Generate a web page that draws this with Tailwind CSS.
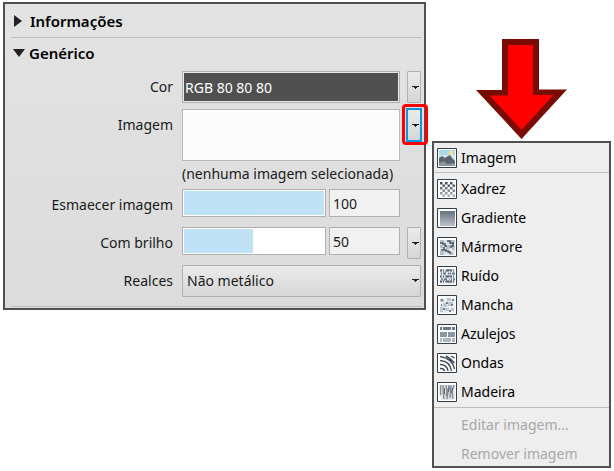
<!DOCTYPE html>
<html lang="pt-BR">
<head>
  <meta charset="UTF-8">
  <meta name="viewport" content="width=device-width, initial-scale=1">
  <title>Genérico</title>
  <script src="https://cdn.jsdelivr.net/npm/@tailwindcss/browser@4"></script>
</head>
<body class="bg-white font-['Noto_Sans',sans-serif] text-sm leading-5 text-[#1a1a1a]">
  <main class="flex items-start gap-[6px] pl-[3px] pr-[3px] pb-[3px]">

    <!-- Painel de propriedades -->
    <section class="mt-[2px] min-w-0 flex-1 border-2 border-[#505050] bg-linear-to-b from-[#e3e3e3] to-[#dcdcdc]">
      <div class="ml-[6px] mr-[2px]">
        <button type="button" class="flex h-[34px] w-full items-center gap-2 border-b border-[#bdbdbd] pl-[3px] text-[15px] font-semibold text-black">
          <svg class="h-3 w-2" viewBox="0 0 8 12" fill="#222"><path d="M0 0L8 6L0 12Z"/></svg>
          Informações
        </button>
        <button type="button" class="flex h-[29px] w-full items-center gap-1 pl-[2px] text-[15px] font-semibold text-black">
          <svg class="h-2 w-3" viewBox="0 0 12 8" fill="#222"><path d="M0 0H12L6 8Z"/></svg>
          Genérico
        </button>

        <div class="mr-px flex flex-col gap-[6px] pt-1 pb-[9px]">
          <div class="flex items-center gap-[7px]">
            <label for="cor" class="w-[162px] shrink-0 text-right">Cor</label>
            <input id="cor" value="RGB 80 80 80" readonly class="ml-[2px] h-8 min-w-0 flex-1 border border-[#b0b0b0] bg-[#505050] px-[2px] text-white outline outline-[#e8e8e8] -outline-offset-2">
            <button type="button" aria-label="Opções de cor" class="flex h-8 w-[14px] items-center justify-end rounded-[1px] border border-[#b0b0b0] bg-linear-to-b from-[#ebebeb] to-[#d6d6d6] pr-px"><svg class="h-[3px] w-[7px]" viewBox="0 0 7 3" fill="#222"><path d="M0 0H7V1H5V2H4V3H3V2H2V1H0Z"/></svg></button>
          </div>

          <div class="flex items-start gap-[7px]">
            <span class="w-[162px] shrink-0 pt-[6px] text-right">Imagem</span>
            <div class="ml-[2px] min-w-0 flex-1">
              <div class="h-[52px] border border-[#b8b8b8] bg-[#fcfcfc]"></div>
              <p class="h-[22px] pt-[3px] whitespace-nowrap">(nenhuma imagem selecionada)</p>
            </div>
            <button type="button" aria-label="Opções de imagem" class="relative flex h-8 w-[14px] items-center justify-end bg-linear-to-b from-[#ebebeb] to-[#d6d6d6] pr-[2px]"><span class="absolute -top-[5px] -right-[7px] -bottom-1 -left-[5px] rounded border-3 border-[#ff0000]"></span><span class="absolute -inset-px border-2 border-[#0c95e0]"></span><svg class="h-[3px] w-[7px]" viewBox="0 0 7 3" fill="#222"><path d="M0 0H7V1H5V2H4V3H3V2H2V1H0Z"/></svg></button>
          </div>

          <div class="flex h-8 items-start gap-[7px]">
            <label for="esmaecer" class="w-[162px] shrink-0 pt-[6px] text-right">Esmaecer imagem</label>
            <div class="ml-[2px] flex min-w-0 flex-1 gap-[3px]">
              <input id="esmaecer" type="range" value="100" class="h-7 min-w-0 flex-1 appearance-none border border-[#b0b0b0] bg-linear-to-r from-[#c0e2f7] from-100% to-white to-100% outline outline-white -outline-offset-2 [&::-webkit-slider-thumb]:appearance-none">
              <input aria-label="Valor de esmaecer imagem" value="100" class="h-7 w-[71px] border border-[#b0b0b0] bg-[#f1f1f1] px-[3px]">
            </div>
            <span class="w-[14px]"></span>
          </div>

          <div class="flex h-8 items-start gap-[7px]">
            <label for="brilho" class="w-[162px] shrink-0 pt-[6px] text-right">Com brilho</label>
            <div class="ml-[2px] flex min-w-0 flex-1 gap-[3px]">
              <input id="brilho" type="range" value="50" class="h-7 min-w-0 flex-1 appearance-none border border-[#b0b0b0] bg-linear-to-r from-[#c0e2f7] from-49% to-white to-49% outline outline-white -outline-offset-2 [&::-webkit-slider-thumb]:appearance-none">
              <input aria-label="Valor de brilho" value="50" class="h-7 w-[71px] border border-[#b0b0b0] bg-[#f1f1f1] px-[3px]">
            </div>
            <button type="button" aria-label="Opções de brilho" class="flex h-8 w-[14px] items-center justify-end rounded-[1px] border border-[#b0b0b0] bg-linear-to-b from-[#ebebeb] to-[#d6d6d6] pr-px"><svg class="h-[3px] w-[7px]" viewBox="0 0 7 3" fill="#222"><path d="M0 0H7V1H5V2H4V3H3V2H2V1H0Z"/></svg></button>
          </div>

          <div class="flex items-center gap-[7px]">
            <label for="realces" class="w-[162px] shrink-0 text-right">Realces</label>
            <div class="relative ml-[2px] min-w-0 flex-1">
              <select id="realces" class="h-8 w-full appearance-none rounded-[1px] border border-[#b0b0b0] bg-linear-to-b from-[#ebebeb] to-[#d6d6d6] px-1">
                <option>Não metálico</option>
                <option>Metálico</option>
              </select>
              <svg class="pointer-events-none absolute top-[14px] right-[2px] h-[3px] w-[7px]" viewBox="0 0 7 3" fill="#222"><path d="M0 0H7V1H5V2H4V3H3V2H2V1H0Z"/></svg>
            </div>
          </div>
        </div>
        <hr class="mb-px border-[#bdbdbd]">
      </div>
    </section>

    <!-- Seta e menu -->
    <div class="flex w-[179px] shrink-0 flex-col items-center pt-[39px]">
      <svg class="h-[100px] w-[91px]" viewBox="0 0 91 100">
        <path d="M26 0H63V50.500H91L45.500 100L0 51H26Z" fill="#780c02"/>
        <path d="M32 6H57V56H77.500L45.500 91L13.500 56.500H32Z" fill="#ff0000"/>
      </svg>

      <ul role="menu" class="mt-[2px] w-full border-2 border-[#505050] bg-[#eeeeee] text-black [&_button]:flex [&_button]:h-[29px] [&_button]:w-full [&_button]:items-center [&_button]:gap-1 [&_button]:pl-[3px] [&_svg]:h-5 [&_svg]:w-5">
        <li class="border-b border-[#bdbdbd]"><button type="button" role="menuitem">
          <svg viewBox="0 0 20 20"><path d="M.5 .5H19.500V19.500H.5Z" fill="#fff" stroke="#2f3f4c"/><path d="M2 2H18V18H2Z" fill="#a9d8ec"/><path d="M2 7H18V14H2Z" fill="#d3e8ea"/><path d="M12 3H16V7H12Z" fill="#fbe08a"/><path d="M2 10L5 8L8 10L11 8L13 7L15 10L18 13V18H2Z" fill="#59646d"/><path d="M2 15L7 13L10 16L18 15V18H2Z" fill="#8a949e"/></svg>
          Imagem</button></li>
        <li class="pt-px"><button type="button" role="menuitem">
          <svg viewBox="0 0 20 20"><defs><linearGradient id="fade" x2="0" y2="1"><stop stop-color="#39444f"/><stop offset="1" stop-color="#b4b8be"/></linearGradient></defs><path d="M.5 .5H19.500V19.500H.5Z" fill="#fff" stroke="#2f3f4c"/><path fill="url(#fade)" transform="translate(3 3) scale(2.5)" d="M0 0h1v1h-1zM2 0h1v1h-1zM4 0h1v1h-1zM1 1h1v1h-1zM3 1h1v1h-1zM5 1h1v1h-1zM0 2h1v1h-1zM2 2h1v1h-1zM4 2h1v1h-1zM1 3h1v1h-1zM3 3h1v1h-1zM5 3h1v1h-1zM0 4h1v1h-1zM2 4h1v1h-1zM4 4h1v1h-1zM1 5h1v1h-1zM3 5h1v1h-1zM5 5h1v1h-1z"/></svg>
          Xadrez</button></li>
        <li><button type="button" role="menuitem">
          <svg viewBox="0 0 20 20"><defs><linearGradient id="grad" x2="0" y2="1"><stop stop-color="#657181"/><stop offset="1" stop-color="#bcc1cb"/></linearGradient></defs><path d="M.5 .5H19.500V19.500H.5Z" fill="#fff" stroke="#2f3f4c"/><path d="M3 3H18V18H3Z" fill="url(#grad)"/></svg>
          Gradiente</button></li>
        <li><button type="button" role="menuitem">
          <svg viewBox="0 0 20 20"><path d="M.5 .5H19.500V19.500H.5Z" fill="#fff" stroke="#2f3f4c"/><path d="M3 3H18V18H3Z" fill="#e2e6ea"/><path d="M3 3h4v2H3zM14 3h4v2h-4zM3 8h3v3H3zM9 8h4v4H9zM15 9h3v4h-3zM3 14h4v4H3zM13 15h3v3h-3z" fill="#b5bfca"/><path d="M3 6h3v1h2v2h2M10 4h3v2h3v3h-2v2M7 10v3h2v2M11 13v2h2v2M4 13h2M16 6h1" fill="none" stroke="#44525f" stroke-width="1.500"/></svg>
          Mármore</button></li>
        <li><button type="button" role="menuitem">
          <svg viewBox="0 0 20 20"><path d="M.5 .5H19.500V19.500H.5Z" fill="#fff" stroke="#2f3f4c"/><path d="M3 3H18V18H3Z" fill="#e4e8ed"/><path d="M3 4.500H18M3 10.500H18M3 15.500H18" stroke="#4f5f70" stroke-width="2" stroke-dasharray="2 1 1 2 3 1"/><path d="M4 7.500H18M5 13.500H18" stroke="#66778a" stroke-width="2" stroke-dasharray="1 1 3 2 1 1"/><path d="M4.500 6V17M8.500 5V16M12.500 3V18M16.500 4V17" stroke="#8797a8" stroke-dasharray="2 2 1 1"/></svg>
          Ruído</button></li>
        <li><button type="button" role="menuitem">
          <svg viewBox="0 0 20 20"><path d="M.5 .5H19.500V19.500H.5Z" fill="#fff" stroke="#2f3f4c"/><path d="M3 3H18V18H3Z" fill="#eef1f4"/><path d="M3 4h4v3H3zM10 3h4v3h-4zM6 8h4v4H6zM11 7h5v4h-5zM8 13h4v3H8zM14 13h3v3h-3zM3 12h3v5H3z" fill="#bcc6d1"/><path d="M4 4h2v2H4zM15 4h2v2h-2zM9 7h2v2H9zM4 9h1v2H4zM14 9h2v2h-2zM6 13h2v2H6zM12 15h2v2h-2z" fill="#718293"/></svg>
          Mancha</button></li>
        <li><button type="button" role="menuitem">
          <svg viewBox="0 0 20 20"><path d="M.5 .5H19.500V19.500H.5Z" fill="#fff" stroke="#2f3f4c"/><path d="M3 3H5V6H3zM6 3H14V6H6zM15 3H18V6H15z" fill="#6c7a8c"/><path d="M3 8H10V13H3zM11 8H18V13H11z" fill="#8a97a6"/><path d="M3 14H5V18H3zM6 14H14V18H6zM15 14H18V18H15z" fill="#abb5c1"/></svg>
          Azulejos</button></li>
        <li><button type="button" role="menuitem">
          <svg viewBox="0 0 20 20"><path d="M.5 .5H19.500V19.500H.5Z" fill="#fff" stroke="#2f3f4c"/><path d="M3 15.500Q7 15 7.500 18M3 11.500Q10 11.500 11 18M3 7.500Q13 8 14.500 18M3 3.500Q15 5 17.500 16M9 3Q13 5 17.500 10M14 3L17.500 5" fill="none" stroke="#3f4c59" stroke-width="1.400"/></svg>
          Ondas</button></li>
        <li class="pb-px"><button type="button" role="menuitem">
          <svg viewBox="0 0 20 20"><path d="M.5 .5H19.500V19.500H.5Z" fill="#fff" stroke="#2f3f4c"/><path d="M3 3H18V14L15 18H5L3 14Z" fill="#e3e5e8"/><path d="M3.500 3V13M6 3V9L7 17M9 3L10 10L9 14M12 3L10 17M14 3L13 16M17 3L15 9L16 17" fill="none" stroke="#838b95" stroke-width="1.400"/><path d="M7.500 6V12M12.500 5L11.500 10M15.500 6L14.500 11" stroke="#59636e"/></svg>
          Madeira</button></li>
        <li class="border-t border-[#bdbdbd] pt-[2px]"><button type="button" role="menuitem" disabled class="text-[#a8a8a8]"><span class="w-5"></span>Editar imagem...</button></li>
        <li class="-mb-[2px]"><button type="button" role="menuitem" disabled class="text-[#a8a8a8]"><span class="w-5"></span>Remover imagem</button></li>
      </ul>
    </div>
  </main>
</body>
</html>
